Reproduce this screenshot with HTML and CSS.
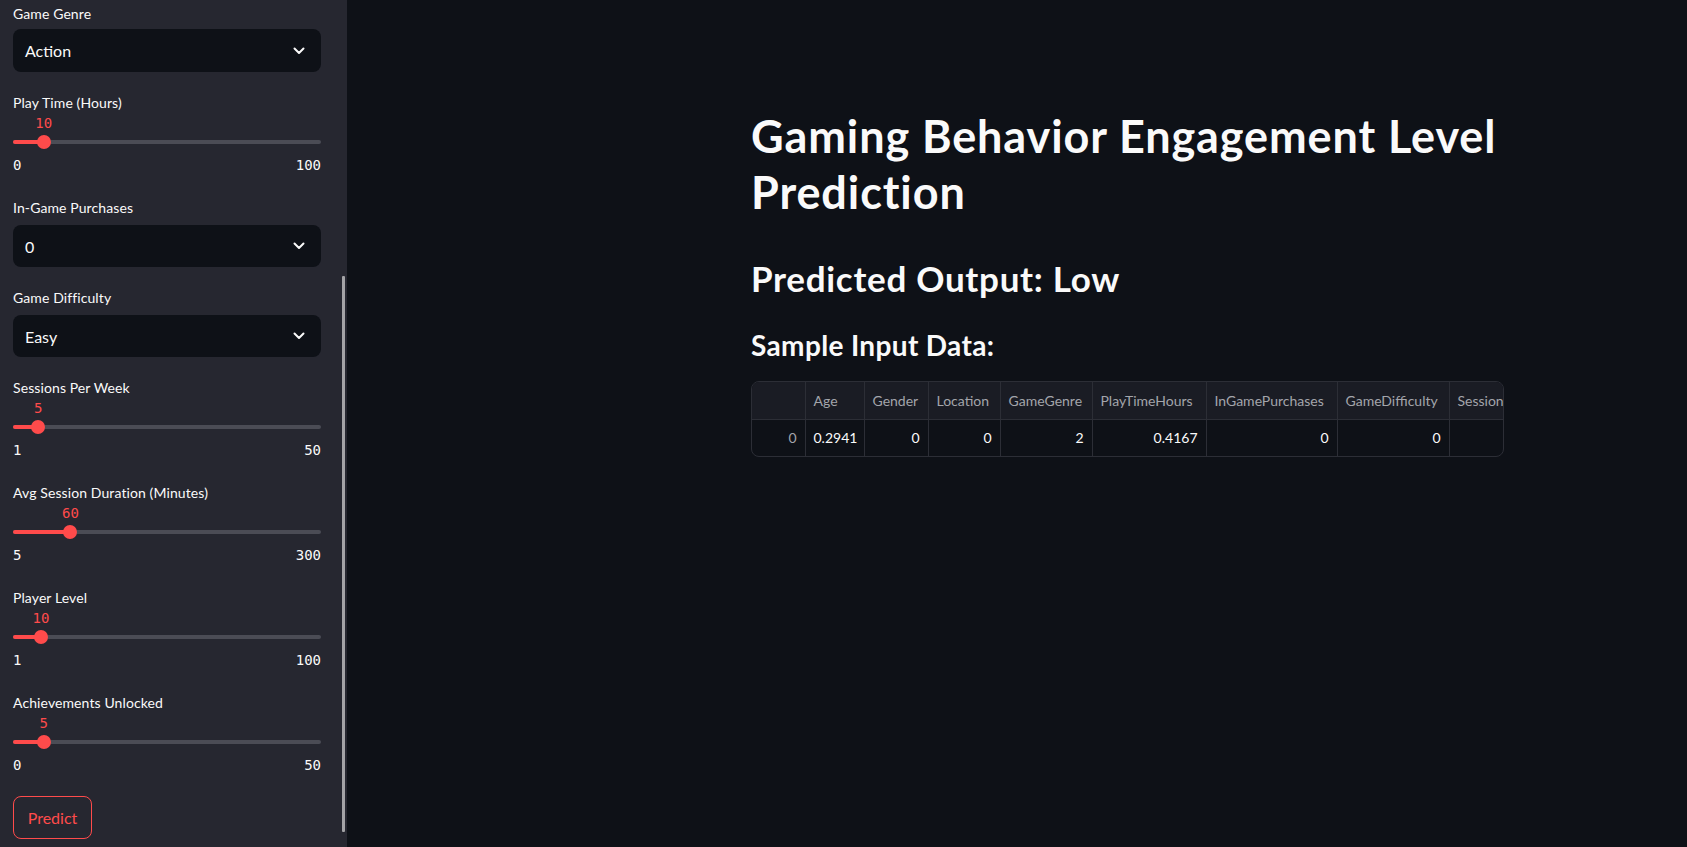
FILE: index.html
```html
<!DOCTYPE html>
<html lang="en">
<head>
<meta charset="utf-8">
<title>Gaming Behavior Engagement Level Prediction</title>
<link rel="stylesheet" href="styles.css">
</head>
<body>
<div class="app">
  <aside class="sidebar">
    <div class="widget select-widget first">
      <div class="label">Game Genre</div>
      <div class="select"><span>Action</span><svg class="chev" width="12" height="8" viewBox="0 0 12 8"><polyline points="1.5,1.5 6,6 10.5,1.5" fill="none" stroke="#fafafa" stroke-width="2" stroke-linecap="round" stroke-linejoin="round"/></svg></div>
    </div>
    <div class="widget slider-widget">
      <div class="label">Play Time (Hours)</div>
      <div class="value-row"><span class="value" style="left:10%">10</span></div>
      <div class="track"><div class="fill" style="width:10%"></div><div class="thumb" style="left:10%"></div></div>
      <div class="minmax"><span>0</span><span>100</span></div>
    </div>
    <div class="widget select-widget">
      <div class="label">In-Game Purchases</div>
      <div class="select"><span>0</span><svg class="chev" width="12" height="8" viewBox="0 0 12 8"><polyline points="1.5,1.5 6,6 10.5,1.5" fill="none" stroke="#fafafa" stroke-width="2" stroke-linecap="round" stroke-linejoin="round"/></svg></div>
    </div>
    <div class="widget select-widget">
      <div class="label">Game Difficulty</div>
      <div class="select"><span>Easy</span><svg class="chev" width="12" height="8" viewBox="0 0 12 8"><polyline points="1.5,1.5 6,6 10.5,1.5" fill="none" stroke="#fafafa" stroke-width="2" stroke-linecap="round" stroke-linejoin="round"/></svg></div>
    </div>
    <div class="widget slider-widget">
      <div class="label">Sessions Per Week</div>
      <div class="value-row"><span class="value" style="left:8.16%">5</span></div>
      <div class="track"><div class="fill" style="width:8.16%"></div><div class="thumb" style="left:8.16%"></div></div>
      <div class="minmax"><span>1</span><span>50</span></div>
    </div>
    <div class="widget slider-widget">
      <div class="label">Avg Session Duration (Minutes)</div>
      <div class="value-row"><span class="value" style="left:18.64%">60</span></div>
      <div class="track"><div class="fill" style="width:18.64%"></div><div class="thumb" style="left:18.64%"></div></div>
      <div class="minmax"><span>5</span><span>300</span></div>
    </div>
    <div class="widget slider-widget">
      <div class="label">Player Level</div>
      <div class="value-row"><span class="value" style="left:9.09%">10</span></div>
      <div class="track"><div class="fill" style="width:9.09%"></div><div class="thumb" style="left:9.09%"></div></div>
      <div class="minmax"><span>1</span><span>100</span></div>
    </div>
    <div class="widget slider-widget">
      <div class="label">Achievements Unlocked</div>
      <div class="value-row"><span class="value" style="left:10%">5</span></div>
      <div class="track"><div class="fill" style="width:10%"></div><div class="thumb" style="left:10%"></div></div>
      <div class="minmax"><span>0</span><span>50</span></div>
    </div>
    <button class="predict">Predict</button>
    <div class="scroll-thumb"></div>
  </aside>
  <main class="main">
    <div class="content">
      <h1>Gaming Behavior Engagement Level Prediction</h1>
      <h2>Predicted Output: Low</h2>
      <h3>Sample Input Data:</h3>
      <div class="table-wrap">
        <table class="df">
          <thead>
            <tr>
              <th class="idx c-idx"></th>
              <th class="c-age">Age</th>
              <th class="c-gender">Gender</th>
              <th class="c-loc">Location</th>
              <th class="c-genre">GameGenre</th>
              <th class="c-play">PlayTimeHours</th>
              <th class="c-purch">InGamePurchases</th>
              <th class="c-diff">GameDifficulty</th>
              <th class="c-sess">SessionsPerWeek</th>
            </tr>
          </thead>
          <tbody>
            <tr>
              <td class="idx">0</td>
              <td>0.2941</td>
              <td>0</td>
              <td>0</td>
              <td>2</td>
              <td>0.4167</td>
              <td>0</td>
              <td>0</td>
              <td></td>
            </tr>
          </tbody>
        </table>
      </div>
    </div>
  </main>
</div>
</body>
</html>
```

FILE: styles.css
```css
* { box-sizing: border-box; }
html, body {
  margin: 0;
  padding: 0;
  height: 100%;
  background: #0e1117;
  color: #fafafa;
  font-family: Lato, "Noto Sans", sans-serif;
  overflow: hidden;
}
.app {
  display: flex;
  height: 847px;
}
.sidebar {
  position: relative;
  width: 347px;
  flex: none;
  background: #262730;
  padding: 2px 26px 0 13px;
  display: flex;
  flex-direction: column;
}
.label {
  height: 21px;
  padding-top: 1px;
  line-height: 21px;
  font-size: 14px;
  letter-spacing: 0.1px;
  color: #fafafa;
  white-space: nowrap;
}
.select-widget {
  display: flex;
  flex-direction: column;
  margin-bottom: 19px;
}
.select-widget .label { margin-bottom: 8px; }
.select-widget.first .label { margin-bottom: 6px; }
.select-widget.first .select { height: 43px; }
.select {
  height: 42px;
  background: #0e1117;
  border-radius: 8px;
  display: flex;
  align-items: center;
  justify-content: space-between;
  padding: 0 16px 0 12px;
  font-size: 16px;
  color: #fafafa;
}
.chev { display: block; }
.slider-widget {
  display: flex;
  flex-direction: column;
  margin-bottom: 20px;
}
.value-row {
  position: relative;
  height: 21px;
  margin-top: 1px;
}
.value {
  position: absolute;
  top: 0;
  transform: translateX(-50%);
  line-height: 21px;
  font-family: "DejaVu Sans Mono", "Liberation Mono", monospace;
  font-size: 14px;
  color: #ff4b4b;
}
.track {
  position: relative;
  height: 16px;
}
.track::before {
  content: "";
  position: absolute;
  left: 0;
  right: 0;
  top: 6px;
  height: 4px;
  border-radius: 2px;
  background: #4b4c55;
}
.fill {
  position: absolute;
  left: 0;
  top: 6px;
  height: 4px;
  border-radius: 2px;
  background: #ff4b4b;
}
.thumb {
  position: absolute;
  top: 1px;
  width: 14px;
  height: 14px;
  margin-left: -7px;
  border-radius: 50%;
  background: #ff4b4b;
}
.minmax {
  display: flex;
  justify-content: space-between;
  margin-top: 5px;
  height: 21px;
  line-height: 21px;
  font-family: "DejaVu Sans Mono", "Liberation Mono", monospace;
  font-size: 14px;
  color: #fafafa;
}
.predict {
  align-self: flex-start;
  margin-top: 0;
  width: 79px;
  height: 43px;
  background: transparent;
  border: 1px solid #ff4b4b;
  border-radius: 8px;
  color: #ff4b4b;
  font-family: Lato, "Noto Sans", sans-serif;
  font-size: 16px;
  padding: 0;
}
.scroll-thumb {
  position: absolute;
  left: 342px;
  top: 276px;
  width: 3px;
  height: 556px;
  background: #a3a3a6;
  border-radius: 1px;
}
.main {
  flex: 1;
  padding: 108px 0 0 404px;
  min-width: 0;
}
.content {
  width: 752px;
}
h1 {
  margin: 0;
  font-size: 45px;
  line-height: 56px;
  letter-spacing: 0.9px;
  font-weight: 700;
  color: #fafafa;
}
h2 {
  margin: 38px 0 0 0;
  font-size: 35px;
  line-height: 40px;
  letter-spacing: 0.7px;
  font-weight: 700;
}
h3 {
  margin: 30px 0 0 0;
  font-size: 28px;
  line-height: 34px;
  letter-spacing: 0.35px;
  font-weight: 700;
}
.table-wrap {
  margin-top: 19px;
  width: 753px;
  height: 76px;
  border: 1px solid #2c2e36;
  border-radius: 8px;
  overflow: hidden;
}
.df {
  border-collapse: collapse;
  table-layout: fixed;
  width: 840px;
  font-size: 14px;
}
.df th, .df td {
  height: 37px;
  padding: 0 8px;
  border-right: 1px solid #2c2e36;
  white-space: nowrap;
  overflow: hidden;
}
.df th {
  background: #1a1c24;
  color: #a3a5ab;
  font-weight: 400;
  text-align: left;
  border-bottom: 1px solid #2c2e36;
}
.df td {
  text-align: right;
  color: #fafafa;
}
.df td.idx { color: #a3a5ab; }
.c-idx { width: 53px; }
.c-age { width: 59px; }
.c-gender { width: 64px; }
.c-loc { width: 72px; }
.c-genre { width: 92px; }
.c-play { width: 114px; }
.c-purch { width: 131px; }
.c-diff { width: 112px; }
.c-sess { width: 143px; }
```
